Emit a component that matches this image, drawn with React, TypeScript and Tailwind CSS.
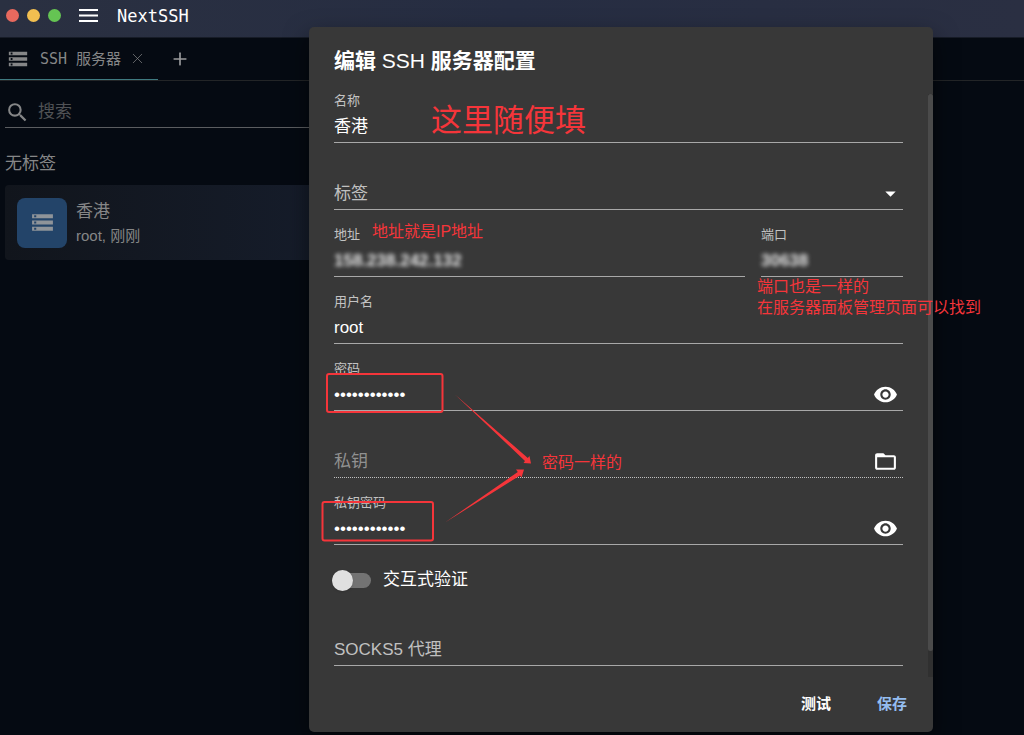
import { useState, type ReactNode } from 'react';
import { Plus, X } from 'lucide-react';
import {
  MdArrowDropDown,
  MdFolderOpen,
  MdSearch,
  MdStorage,
  MdVisibility,
} from 'react-icons/md';
import clsx from 'clsx';

const inputClass =
  'min-w-0 flex-1 bg-transparent text-[17px] leading-6 text-white outline-none placeholder:text-[#c0c0c0]';

// blurred values of the host and port
const maskedClass =
  'min-w-0 flex-1 bg-transparent text-[17px] leading-6 font-bold text-[#e4e4e4] blur-[2px] outline-none';

interface FieldProps {
  id: string;
  label?: string;
  dotted?: boolean;
  className?: string;
  children: ReactNode;
}

function Field(props: FieldProps) {
  const { id, label, dotted, className, children } = props;

  return (
    <div
      className={clsx(
        'flex h-[67px] flex-col justify-end border-b',
        dotted ? 'border-dotted border-[#c0c0c0]' : 'border-[#a8a8a8]',
        className,
      )}
    >
      {label && (
        <label htmlFor={id} className="text-[13px] leading-5 text-[#c3c3c3]">
          {label}
        </label>
      )}
      <div className="flex h-[31px] items-center pr-[5px]">{children}</div>
    </div>
  );
}

function PasswordField({ id, label }: { id: string; label: string }) {
  const [visible, setVisible] = useState(false);

  return (
    <Field id={id} label={label}>
      <input
        id={id}
        type={visible ? 'text' : 'password'}
        defaultValue="passwordpass"
        className={inputClass}
      />
      <button
        type="button"
        aria-label="显示密码"
        onClick={() => setVisible(!visible)}
      >
        <MdVisibility size={25} />
      </button>
    </Field>
  );
}

function TitleBar() {
  return (
    <header className="flex h-[38px] items-start border-b border-[#171c27] bg-linear-to-r from-[#2a3041] via-[#262d42] to-[#2a2f42] pl-[6px]">
      <div className="flex h-[30px] items-center gap-2">
        <span className="size-[13px] rounded-full bg-[#e8695e]" />
        <span className="size-[13px] rounded-full bg-[#f2bf50]" />
        <span className="size-[13px] rounded-full bg-[#65c453]" />
      </div>
      <button type="button" aria-label="菜单" className="ml-[18px] pt-[9px]">
        <svg width="19" height="14" viewBox="0 0 19 14" fill="#fff">
          <path d="M0 0h19v2H0zM0 5.5h19v2H0zM0 11h19v2H0z" />
        </svg>
      </button>
      <h1 className="ml-[19px] pt-1 font-['DejaVu_Sans_Mono',monospace] text-[17px] leading-6 text-white">
        NextSSH
      </h1>
    </header>
  );
}

function Tabs() {
  return (
    <nav className="flex h-[43px] border-b border-[#232527]">
      <div className="flex w-[158px] items-center border-b border-[#3f7a80] pl-[7px] text-[#858687]">
        <MdStorage size={22} />
        <a
          href="#servers"
          className="ml-[11px] pt-[2px] font-['DejaVu_Sans_Mono','Noto_Sans_CJK_SC',monospace] text-[15px] whitespace-nowrap"
        >
          SSH 服务器
        </a>
        <button type="button" aria-label="关闭标签页" className="ml-2">
          <X size={17} strokeWidth={1} />
        </button>
      </div>
      <button
        type="button"
        aria-label="新建标签页"
        className="ml-3 text-[#9a9b9c]"
      >
        <Plus size={20} strokeWidth={2} />
      </button>
    </nav>
  );
}

function ServerList() {
  return (
    <main className="w-3/4 pl-[5px] text-[#858687]">
      <div className="flex h-[47px] items-center border-b border-[#5b5d60] pt-4">
        <MdSearch size={25} />
        <input
          type="search"
          aria-label="搜索"
          placeholder="搜索"
          className="ml-2 text-[17px] outline-none placeholder:text-[#505255]"
        />
      </div>
      <h2 className="mt-6 text-[17px] leading-6">无标签</h2>
      <a
        href="#hk"
        className="mt-[9px] flex h-[75px] items-center rounded-[4px] bg-linear-to-r from-[#11151c] to-[#1c2740] pl-3"
      >
        <span className="grid size-[50px] place-items-center rounded-[8px] bg-[#234469] text-[#8f9499]">
          <MdStorage size={25} />
        </span>
        <span className="ml-[9px] flex flex-col pt-[2px]">
          <span className="text-[17px] leading-6">香港</span>
          <span className="text-[15px] leading-6">root, 刚刚</span>
        </span>
      </a>
    </main>
  );
}

function Annotations() {
  return (
    <div className="pointer-events-none absolute inset-0 text-base leading-[21px] whitespace-nowrap text-[#f5353a]">
      <p className="absolute top-[72px] left-[122px] text-[31px] leading-[44px]">
        这里随便填
      </p>
      <p className="absolute top-[194px] left-[63px]">地址就是IP地址</p>
      <p className="absolute top-[249px] left-[448px]">
        端口也是一样的
        <br />
        在服务器面板管理页面可以找到
      </p>
      <p className="absolute top-[425px] left-[233px]">密码一样的</p>
      <svg
        className="absolute top-0 left-0"
        width="624"
        height="705"
        viewBox="309 27 624 705"
        fill="#f5353a"
      >
        <g fill="none" stroke="#f5353a" strokeWidth="2">
          <rect x="327" y="374" width="115.500" height="38" rx="2" />
          <rect x="322.500" y="502" width="110.500" height="38.500" rx="2" />
        </g>
        <path d="M455 394.500L525 461L523.500 463L531 463.500L529.500 456L527.800 458Z" />
        <path d="M445 522.500L520 475.500L521.500 477.500L524 469.500L516 469.500L517.800 472Z" />
      </svg>
    </div>
  );
}

function EditDialog() {
  return (
    <div
      role="dialog"
      aria-labelledby="dialog-title"
      className="relative flex w-[624px] flex-col rounded-[5px] bg-[#383838] text-white shadow-[0_10px_24px_rgba(0,0,0,0.5)]"
    >
      <h2
        id="dialog-title"
        className="px-[25px] pt-[19px] text-[21px] leading-[30px] font-bold"
      >
        编辑 <span className="font-normal">SSH</span> 服务器配置
      </h2>
      <div className="mt-[18px] flex h-[583px]">
        <form className="-mt-[18px] flex-1 px-[25px]">
          <Field id="name" label="名称">
            <input id="name" defaultValue="香港" className={inputClass} />
          </Field>
          <Field id="tag">
            <select
              id="tag"
              aria-label="标签"
              className="flex-1 appearance-none bg-transparent text-[17px] leading-6 text-[#c0c0c0] outline-none"
            >
              <option>标签</option>
            </select>
            <MdArrowDropDown size={25} className="-mr-[5px]" />
          </Field>
          <div className="flex gap-4">
            <Field id="host" label="地址" className="flex-1">
              <input
                id="host"
                defaultValue="158.238.242.132"
                className={maskedClass}
              />
            </Field>
            <Field id="port" label="端口" className="w-[142px]">
              <input id="port" defaultValue="30638" className={maskedClass} />
            </Field>
          </div>
          <Field id="user" label="用户名">
            <input id="user" defaultValue="root" className={inputClass} />
          </Field>
          <PasswordField id="password" label="密码" />
          <Field id="key" dotted>
            <input
              id="key"
              aria-label="私钥"
              placeholder="私钥"
              className="min-w-0 flex-1 text-[17px] leading-6 outline-none placeholder:text-[#919191]"
            />
            <button type="button" aria-label="选择文件">
              <MdFolderOpen size={25} />
            </button>
          </Field>
          <PasswordField id="passphrase" label="私钥密码" />
          <label className="mt-[21px] flex h-7 items-center gap-3 text-[17px]">
            <input type="checkbox" role="switch" className="peer sr-only" />
            <span className="-ml-[2px] flex h-[15px] w-[39px] items-center rounded-full bg-[#737373]">
              <span className="size-[21px] rounded-full bg-[#e0e0e0] shadow" />
            </span>
            交互式验证
          </label>
          <Field id="proxy" className="mt-[5px]">
            <input
              id="proxy"
              aria-label="SOCKS5 代理"
              placeholder="SOCKS5 代理"
              className={inputClass}
            />
          </Field>
        </form>
        <div className="flex w-[5px] flex-col bg-[#303030] pb-[26px]">
          <div className="flex-1 rounded-full bg-[#4b4b4b]" />
        </div>
      </div>
      <div className="flex h-[55px] items-center justify-end gap-[46px] pr-[26px] text-[15px] font-bold">
        <button type="button">测试</button>
        <button type="button" className="text-[#94bdf0]">
          保存
        </button>
      </div>
      <Annotations />
    </div>
  );
}

export default function App() {
  return (
    <div className="relative min-h-screen overflow-hidden bg-[#050a12] font-['Liberation_Sans','Noto_Sans_CJK_SC',sans-serif]">
      <TitleBar />
      <Tabs />
      <ServerList />
      <div className="absolute inset-0 flex items-start justify-end pt-[27px] pr-[91px]">
        <EditDialog />
      </div>
    </div>
  );
}
